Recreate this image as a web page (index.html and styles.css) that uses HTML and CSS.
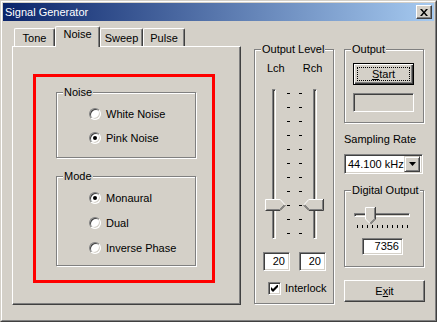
FILE: index.html
```html
<!DOCTYPE html>
<html lang="en">

<head>
    <meta charset="UTF-8">
    <title>Signal Generator</title>
    <link rel="stylesheet" href="styles.css">
</head>

<body>
    <div class="window">
        <div class="frame">
            <div class="titlebar">
                <span class="title">Signal Generator</span>
                <span class="close-btn">
                    <svg width="8" height="7" viewBox="0 0 8 7"><path d="M0 0h2l2 2.4 2-2.4h2l-3 3.5 3 3.5h-2l-2-2.4-2 2.4h-2l3-3.5z" fill="#000"/></svg>
                </span>
            </div>

            <div class="client">
                <!-- Tab control -->
                <div class="tabctl">
                    <div class="tabs">
                        <div class="tab tab-tone">Tone</div>
                        <div class="tab tab-noise active">Noise</div>
                        <div class="tab tab-sweep">Sweep</div>
                        <div class="tab tab-pulse">Pulse</div>
                    </div>
                    <div class="panel">
                        <div class="highlight">
                            <fieldset class="group noise-group">
                                <legend>Noise</legend>
                                <div class="group-body">
                                    <div class="option"><span class="radio"></span>White Noise</div>
                                    <div class="option"><span class="radio checked"></span>Pink Noise</div>
                                </div>
                            </fieldset>
                            <fieldset class="group mode-group">
                                <legend>Mode</legend>
                                <div class="group-body">
                                    <div class="option"><span class="radio checked"></span>Monaural</div>
                                    <div class="option"><span class="radio"></span>Dual</div>
                                    <div class="option"><span class="radio"></span>Inverse Phase</div>
                                </div>
                            </fieldset>
                        </div>
                    </div>
                </div>

                <!-- Output level -->
                <fieldset class="group level-group">
                    <legend>Output Level</legend>
                    <div class="ch-labels"><span>Lch</span><span>Rch</span></div>
                    <div class="vsliders">
                        <div class="vtrack">
                            <svg class="vthumb left" width="21" height="12" viewBox="0 0 21 12">
                                <path d="M0 0H15L20.5 6L15 12H0Z" fill="#d4d0c8"/>
                                <path d="M0.5 11.5V0.5H15.2L20 5.7" fill="none" stroke="#fff"/>
                                <path d="M0.5 11.5H15L20.3 6.2" fill="none" stroke="#404040"/>
                                <path d="M1.5 10.5H14.6L19 6" fill="none" stroke="#808080"/>
                            </svg>
                        </div>
                        <div class="ticks"><i></i><i></i><i></i><i></i><i></i><i></i><i></i><i></i><i></i><i></i><i></i></div>
                        <div class="ticks"><i></i><i></i><i></i><i></i><i></i><i></i><i></i><i></i><i></i><i></i><i></i></div>
                        <div class="vtrack">
                            <svg class="vthumb right" width="21" height="12" viewBox="0 0 21 12">
                                <path d="M21 0H6L0.5 6L6 12H21Z" fill="#d4d0c8"/>
                                <path d="M1 5.7L5.8 0.5H20" fill="none" stroke="#fff"/>
                                <path d="M0.7 6.2L6 11.5H20.5V0" fill="none" stroke="#404040"/>
                                <path d="M2 6L6.4 10.5H19.5V1" fill="none" stroke="#808080"/>
                            </svg>
                        </div>
                    </div>
                    <div class="level-edits">
                        <div class="edit small">20</div>
                        <div class="edit small">20</div>
                    </div>
                    <div class="check-row">
                        <span class="checkbox">
                            <svg width="7" height="7" viewBox="0 0 7 7"><path d="M0 2v3l2 2 5-5v-3l-5 5z" fill="#000"/></svg>
                        </span>
                        Interlock
                    </div>
                </fieldset>

                <!-- Right side -->
                <div class="side">
                    <fieldset class="group output-group">
                        <legend>Output</legend>
                        <div class="group-body">
                            <div class="btn default"><span class="focus"><u>S</u>tart</span></div>
                            <div class="status-box"></div>
                        </div>
                    </fieldset>

                    <div class="side-label">Sampling Rate</div>
                    <div class="combo">
                        <span class="combo-text">44.100 kHz</span>
                        <span class="combo-btn">
                            <svg width="7" height="4" viewBox="0 0 7 4"><path d="M0 0h7l-3.5 4z" fill="#000"/></svg>
                        </span>
                    </div>

                    <fieldset class="group digital-group">
                        <legend>Digital Output</legend>
                        <div class="htrack">
                            <svg class="hthumb" width="11" height="17" viewBox="0 0 11 17">
                                <path d="M0 0H10V12L5 17L0 12Z" fill="#d4d0c8"/>
                                <path d="M0.5 12V0.5H9.5" fill="none" stroke="#fff"/>
                                <path d="M10.5 0V12L5.5 17" fill="none" stroke="#404040"/>
                                <path d="M9.5 1V11.7L5.2 16" fill="none" stroke="#808080"/>
                                <path d="M0.5 12L4.8 16.3" fill="none" stroke="#fff"/>
                            </svg>
                        </div>
                        <div class="hticks"><i></i><i></i><i></i><i></i><i></i><i></i><i></i><i></i><i></i><i></i><i></i></div>
                        <div class="edit digital">7356</div>
                    </fieldset>

                    <div class="btn exit">E<u>x</u>it</div>
                </div>
            </div>
        </div>
    </div>
</body>

</html>
```

FILE: styles.css
```css
/* Global */
* {
    font-family: "Liberation Sans", Arial, sans-serif;
    font-size: 11px;
    color: #000;
}

body {
    margin: 0;
    background-color: #d4d0c8;
}

/* Window frame */
.window {
    width: 437px;
    height: 322px;
    box-sizing: border-box;
    border: 1px solid;
    border-color: #d4d0c8 #404040 #404040 #d4d0c8;
}

.frame {
    height: 100%;
    box-sizing: border-box;
    border: 1px solid;
    border-color: #fff #808080 #808080 #fff;
    padding: 1px;
}

/* Title bar */
.titlebar {
    height: 18px;
    display: flex;
    align-items: center;
    justify-content: space-between;
    padding: 0 2px 0 2px;
    background: linear-gradient(to right, #0a246a, #a6caf0);
}

.title {
    color: #fff;
    line-height: 18px;
}

.close-btn {
    width: 16px;
    height: 14px;
    box-sizing: border-box;
    display: flex;
    align-items: center;
    justify-content: center;
    background: #d4d0c8;
    border: 1px solid;
    border-color: #fff #404040 #404040 #fff;
    box-shadow: inset -1px -1px 0 #808080;
}

/* Client area */
.client {
    display: flex;
    padding-left: 9px;
}

/* Tabs */
.tabctl {
    width: 229px;
    margin-top: 5px;
}

.tabs {
    display: flex;
    align-items: flex-end;
    height: 20px;
    padding-left: 2px;
}

.tab {
    height: 18px;
    box-sizing: border-box;
    border-top: 1px solid #fff;
    border-left: 1px solid #fff;
    border-right: 1px solid #404040;
    box-shadow: inset -1px 0 0 #808080;
    border-radius: 2px 2px 0 0;
    text-align: center;
    line-height: 18px;
}

.tab-tone { width: 41px; }
.tab-noise { width: 45px; }
.tab-sweep { width: 43px; }
.tab-pulse { width: 42px; }

.tab.active {
    height: 21px;
    margin-bottom: -1px;
    position: relative;
    z-index: 1;
    background: #d4d0c8;
    line-height: 15px;
}

.panel {
    height: 259px;
    box-sizing: border-box;
    border: 1px solid;
    border-color: #fff #404040 #404040 #fff;
    box-shadow: inset -1px -1px 0 #808080;
    padding: 27px 0 0 20px;
}

.highlight {
    width: 182px;
    height: 209px;
    box-sizing: border-box;
    border: 3px solid #ff0000;
    padding: 9px 0 0 20px;
}

/* Group boxes */
.group {
    margin: 0;
    padding: 0;
    min-inline-size: 0;
    box-sizing: border-box;
    border: 1px solid #808080;
    box-shadow: 1px 1px 0 #fff, inset 1px 1px 0 #fff;
}

.group legend {
    margin-left: 6px;
    padding: 0 1px;
    line-height: 13px;
    background: #d4d0c8;
}

.noise-group {
    width: 140px;
}

.noise-group .group-body {
    padding: 3px 0 7px 32px;
}

.mode-group {
    width: 140px;
    margin-top: 12px;
}

.mode-group .group-body {
    padding: 2px 0 5px 32px;
}

.option {
    display: flex;
    align-items: center;
    height: 24px;
}

.mode-group .option {
    height: 25px;
}

.radio {
    width: 12px;
    height: 12px;
    box-sizing: border-box;
    margin-right: 5px;
    border-radius: 50%;
    border: 1px solid;
    border-color: #808080 #fff #fff #808080;
    background: #fff;
    box-shadow: inset 1px 1px 0 #404040, inset -1px -1px 0 #d4d0c8;
    display: flex;
    align-items: center;
    justify-content: center;
}

.radio.checked::after {
    content: "";
    width: 4px;
    height: 4px;
    border-radius: 50%;
    background: #000;
}

/* Output level */
.level-group {
    width: 80px;
    height: 261px;
    margin-top: 22px;
    margin-left: 13px;
}

.ch-labels {
    display: flex;
    gap: 18px;
    padding-left: 12px;
    margin-top: 6px;
    line-height: 13px;
}

.vsliders {
    display: flex;
    justify-content: center;
    margin-top: 14px;
    height: 150px;
}

.vtrack {
    position: relative;
    width: 2px;
    height: 148px;
    border: 1px solid;
    border-color: #808080 #fff #fff #808080;
    box-shadow: inset 1px 1px 0 #404040;
}

.vsliders .vtrack:first-child { margin-right: 11px; }
.vsliders .vtrack:last-child { margin-left: 11px; }

.vthumb {
    position: absolute;
    top: 109px;
    display: block;
}

.vthumb.left { left: -8px; }
.vthumb.right { left: -11px; }

.ticks {
    display: flex;
    flex-direction: column;
    gap: 13px;
    padding-top: 4px;
}

.ticks + .ticks { margin-left: 9px; }

.ticks i {
    display: block;
    width: 3px;
    height: 1px;
    background: #000;
}

.level-edits {
    display: flex;
    gap: 9px;
    padding-left: 8px;
    margin-top: 13px;
}

.edit {
    box-sizing: border-box;
    border: 1px solid;
    border-color: #808080 #fff #fff #808080;
    box-shadow: inset 1px 1px 0 #404040, inset -1px -1px 0 #d4d0c8;
    background: #fff;
    text-align: right;
}

.edit.small {
    width: 27px;
    height: 19px;
    line-height: 17px;
    padding-right: 4px;
}

.check-row {
    display: flex;
    align-items: center;
    gap: 4px;
    padding-left: 13px;
    margin-top: 11px;
    line-height: 13px;
}

.checkbox {
    width: 13px;
    height: 13px;
    box-sizing: border-box;
    border: 1px solid;
    border-color: #808080 #fff #fff #808080;
    box-shadow: inset 1px 1px 0 #404040, inset -1px -1px 0 #d4d0c8;
    background: #fff;
    display: flex;
    align-items: center;
    justify-content: center;
}

.checkbox svg { display: block; }

/* Right side column */
.side {
    width: 81px;
    margin-left: 10px;
    margin-top: 22px;
}

.output-group {
    width: 80px;
    height: 80px;
}

.output-group .group-body {
    padding-left: 8px;
}

.btn {
    box-sizing: border-box;
    height: 22px;
    display: flex;
    align-items: center;
    justify-content: center;
    background: #d4d0c8;
    border: 1px solid;
    border-color: #fff #404040 #404040 #fff;
    box-shadow: inset -1px -1px 0 #808080;
}

.btn.default {
    width: 61px;
    margin-top: 7px;
    border: 1px solid #000;
    box-shadow: inset 1px 1px 0 #fff, inset -1px -1px 0 #404040, inset -2px -2px 0 #808080;
}

.focus {
    flex: 1;
    align-self: stretch;
    margin: 3px;
    border: 1px dotted #000;
    display: flex;
    align-items: center;
    justify-content: center;
}

.status-box {
    width: 61px;
    height: 19px;
    margin-top: 8px;
    box-sizing: border-box;
    border: 1px solid;
    border-color: #808080 #fff #fff #808080;
    box-shadow: inset 1px 1px 0 #404040;
}

.side-label {
    margin-top: 10px;
    line-height: 13px;
}

.combo {
    width: 79px;
    height: 20px;
    margin-top: 8px;
    box-sizing: border-box;
    display: flex;
    align-items: center;
    justify-content: space-between;
    padding: 2px;
    border: 1px solid;
    border-color: #808080 #fff #fff #808080;
    box-shadow: inset 1px 1px 0 #404040, inset -1px -1px 0 #d4d0c8;
    background: #fff;
}

.combo-text {
    padding-left: 1px;
}

.combo-btn {
    width: 16px;
    height: 16px;
    box-sizing: border-box;
    display: flex;
    align-items: center;
    justify-content: center;
    background: #d4d0c8;
    border: 1px solid;
    border-color: #d4d0c8 #404040 #404040 #d4d0c8;
    box-shadow: inset 1px 1px 0 #fff, inset -1px -1px 0 #808080;
}

/* Digital output */
.digital-group {
    width: 80px;
    height: 83px;
    margin-top: 10px;
}

.htrack {
    position: relative;
    width: 54px;
    height: 2px;
    margin: 16px 0 0 9px;
    border: 1px solid;
    border-color: #808080 #fff #fff #808080;
    box-shadow: inset 1px 1px 0 #404040;
}

.hthumb {
    position: absolute;
    top: -7px;
    left: 10px;
    display: block;
}

.hticks {
    display: flex;
    gap: 4px;
    margin: 8px 0 0 12px;
}

.hticks i {
    display: block;
    width: 1px;
    height: 3px;
    background: #000;
}

.edit.digital {
    width: 41px;
    height: 17px;
    margin: 10px 0 0 17px;
    line-height: 15px;
    padding-right: 3px;
}

.btn.exit {
    width: 81px;
    margin-top: 13px;
}
```
